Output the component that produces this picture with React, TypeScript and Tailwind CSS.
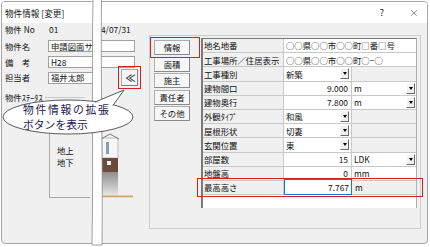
import React from "react";
import { X } from "lucide-react";

type Row = {
  l: string;
  span?: string;
  sel?: string;
  num?: string;
  unit?: string;
  unitSel?: boolean;
  unitWhite?: boolean;
  focus?: string;
};

const rows: Row[] = [
  { l: "地名地番", span: "○○県○○市○○町□番□号" },
  { l: "工事場所／住居表示", span: "○○県○○市○○町○−○" },
  { l: "工事種別", sel: "新築" },
  { l: "建物間口", num: "9.000", unit: "m", unitSel: true },
  { l: "建物奥行", num: "7.800", unit: "m", unitSel: true },
  { l: "外観ﾀｲﾌﾟ", sel: "和風" },
  { l: "屋根形状", sel: "切妻" },
  { l: "玄関位置", sel: "東" },
  { l: "部屋数", num: "15", unit: "LDK", unitSel: true },
  { l: "地盤高", num: "0", unit: "mm", unitWhite: true },
  { l: "最高高さ", focus: "7.767", unit: "m" },
];

const Arrow = () => (
  <div className="w-[9px] h-[11px] bg-[#f0f0f0] border border-t-white border-l-white border-r-[#6a6a6a] border-b-[#6a6a6a] flex items-center justify-center shrink-0">
    <div className="w-0 h-0 border-l-[2.5px] border-r-[2.5px] border-t-[3px] border-l-transparent border-r-transparent border-t-black" />
  </div>
);

const Tab = ({ t }: { t: string }) => (
  <div className="w-[36px] h-[15px] bg-[#f7f7f7] border border-[#adadad] border-b-[#8a8a8a] border-r-[#8a8a8a] flex items-center justify-center text-[8.4px]">
    {t}
  </div>
);

function GridRow({ r }: { r: Row }) {
  const cellLine = "border-b border-[#c8c8c8]";
  return (
    <div className="flex h-[14.2px]">
      <div className={`w-[81px] shrink-0 bg-[#f0f0f0] border-r border-[#c8c8c8] ${cellLine} flex items-center pl-[1px] whitespace-nowrap`}>
        {r.l}
      </div>
      {r.span !== undefined && (
        <div className={`flex-1 bg-white ${cellLine} flex items-center pl-[2px] whitespace-nowrap`}>
          {r.span}
        </div>
      )}
      {r.sel !== undefined && (
        <>
          <div className={`w-[68px] shrink-0 bg-white border-r border-[#8c8c8c] ${cellLine} flex items-center justify-between pl-[2px] pr-[2px]`}>
            <span>{r.sel}</span>
            <Arrow />
          </div>
          <div className={`flex-1 bg-[#f0f0f0] ${cellLine}`} />
        </>
      )}
      {r.num !== undefined && (
        <>
          <div className={`w-[68px] shrink-0 bg-white border-r border-[#c8c8c8] ${cellLine} flex items-center justify-end pr-[3px]`}>
            {r.num}
          </div>
          <div className={`flex-1 ${r.unitSel || r.unitWhite ? "bg-white" : "bg-[#f0f0f0]"} ${cellLine} flex items-center justify-between pl-[2px] pr-[1px]`}>
            <span>{r.unit}</span>
            {r.unitSel && <Arrow />}
          </div>
        </>
      )}
      {r.focus !== undefined && (
        <>
          <div className={`w-[68px] shrink-0 bg-[#f0f0f0] ${cellLine} flex items-center`}>
            <div className="w-[68px] h-[16px] -mt-[1px] bg-white border-[1.5px] border-[#1877d6] flex items-center justify-end pr-[2px]">
              {r.focus}
            </div>
          </div>
          <div className={`flex-1 bg-[#f0f0f0] ${cellLine} flex items-center pl-[3px]`}>
            {r.unit}
          </div>
        </>
      )}
    </div>
  );
}

export default function App() {
  return (
    <div className="relative w-[430px] h-[247px] bg-white overflow-hidden pt-[1px] pl-[1px] font-['Noto_Sans_CJK_JP',sans-serif] text-[8.4px] leading-none text-[#111]">
      {/* window */}
      <div className="w-[427px] h-[243px] rounded-[4px] border border-[#a5a5a5] bg-[#f0f0f0] flex flex-col overflow-hidden">
        {/* title bar */}
        <div className="h-[21px] shrink-0 bg-white flex items-center pl-[3px] text-[8.6px]">
          <span className="mt-[1px]">物件情報 [変更]</span>
          <span className="ml-auto mr-[25px] text-[9px]">?</span>
          <X className="mr-[8px]" size={10} strokeWidth={1.1} />
        </div>
        {/* body */}
        <div className="flex flex-1">
          {/* left panel */}
          <div className="w-[147px] shrink-0 flex flex-col pl-[3px]">
            <div className="h-[13px] flex items-center">
              <span className="w-[43px]">物件 No</span>
              <span className="ml-[1px]">01</span>
              <span className="ml-[38px] whitespace-nowrap">14/07/31</span>
            </div>
            <div className="mt-[4px] h-[12px] flex items-center">
              <span className="w-[43px]">物件名</span>
              <div className="w-[87px] h-[12px] bg-white border border-[#a0a0a0] flex items-center pl-[2px] whitespace-nowrap">
                申請図面サ
              </div>
            </div>
            <div className="mt-[4px] h-[12px] flex items-center">
              <span className="w-[43px]">備　考</span>
              <div className="w-[87px] h-[12px] bg-white border border-[#a0a0a0] flex items-center pl-[2px]">
                H28
              </div>
            </div>
            <div className="mt-[1px] h-[17px] flex items-center">
              <span className="w-[43px]">担当者</span>
              <div className="w-[50px] h-[12px] bg-white border border-[#a0a0a0] flex items-center pl-[2px] whitespace-nowrap">
                福井太郎
              </div>
              <div className="ml-[23px] w-[17px] h-[17px] bg-[#f4f4f4] border border-[#adadad] border-b-[#7d7d7d] border-r-[#7d7d7d] flex items-center justify-center text-[10px] font-bold text-[#333] tracking-[-2px]">
                ≪
              </div>
            </div>
            <div className="mt-[6px] h-[10px] flex items-center">
              <span className="whitespace-nowrap">物件ｽﾃｰﾀｽ</span>
              <div className="ml-[2px] w-[40px] h-px bg-[#c8c8c8]" />
            </div>
            <div className="mt-[26px] h-[70px] flex">
              <div className="ml-[44px] w-[41px] border-l border-b border-[#a8a8a8] pl-[7px] pt-[18px] flex flex-col gap-[4px]">
                <span>地上</span>
                <span>地下</span>
              </div>
              <svg className="ml-[11px]" width="33" height="70" viewBox="0 0 33 70">
                <rect x="1" y="10" width="16" height="20" fill="#f6f6f6" stroke="#9a9a9a" strokeWidth="0.6" />
                <path d="M0 11 L9 6 L18 11" fill="none" stroke="#7a7a7a" strokeWidth="1" />
                <rect x="5" y="14" width="3" height="12" fill="#8c9bb0" />
                <rect x="1" y="30" width="16" height="14" fill="#6a4b3c" />
                <rect x="6" y="33" width="4" height="4" fill="#f2f2f2" />
                <defs>
                  <linearGradient id="g1" x1="0" y1="0" x2="0" y2="1">
                    <stop offset="0" stopColor="#8e8e8e" />
                    <stop offset="1" stopColor="#e8e8e8" />
                  </linearGradient>
                </defs>
                <rect x="1" y="44" width="16" height="24" fill="url(#g1)" />
                <rect x="0" y="67.5" width="32" height="1.8" fill="#c9aa62" />
              </svg>
            </div>
          </div>
          {/* right group box */}
          <div className="mt-[12px] w-[272px] h-[194px] border border-[#cdcdcd] flex">
            <div className="pl-[4px] pt-[4px] flex flex-col gap-[1.5px]">
              <Tab t="情報" />
              <Tab t="面積" />
              <Tab t="施主" />
              <Tab t="責任者" />
              <Tab t="その他" />
            </div>
            <div className="ml-[11px] mt-[2px] w-[216px] h-[170px] bg-white border-l-2 border-t border-r border-[#7a7a7a] border-r-[#b0b0b0] flex flex-col">
              {rows.map((r) => (
                <GridRow key={r.l} r={r} />
              ))}
            </div>
          </div>
        </div>
      </div>

      {/* cut strip */}
      <svg className="absolute left-0 top-0 pointer-events-none" width="430" height="247">
        <path
          d="M93 -2 C 91.5 80, 93.5 160, 92 245 L102 245 C 103 160, 100.5 80, 101.5 -2 Z"
          fill="white"
          stroke="#8a8a8a"
          strokeWidth="0.8"
        />
      </svg>

      {/* red highlight boxes */}
      <div className="absolute left-[118px] top-[66px] w-[23px] h-[23px] border-[1.5px] border-[#d42020]" />
      <div className="absolute left-[150px] top-[37px] w-[50px] h-[21px] border-[1.5px] border-[#d42020]" />
      <div className="absolute left-[197px] top-[178px] w-[226px] h-[19px] border-[1.5px] border-[#d42020]" />

      {/* callout */}
      <svg className="absolute left-0 top-0 pointer-events-none" width="430" height="247">
        <ellipse cx="68" cy="117" rx="65" ry="17" fill="white" stroke="#4a4a4a" strokeWidth="0.9" />
        <path d="M95 102 L124 90 L113 105.5" fill="white" stroke="#4a4a4a" strokeWidth="0.9" strokeLinejoin="round" />
      </svg>
      <div className="absolute left-[23px] top-[104px] flex flex-col gap-[4px] text-[10.8px] leading-[11px] text-[#1c2050] whitespace-nowrap">
        <span className="tracking-[1.7px]">物件情報の拡張</span>
        <span>ボタンを表示</span>
      </div>
    </div>
  );
}
